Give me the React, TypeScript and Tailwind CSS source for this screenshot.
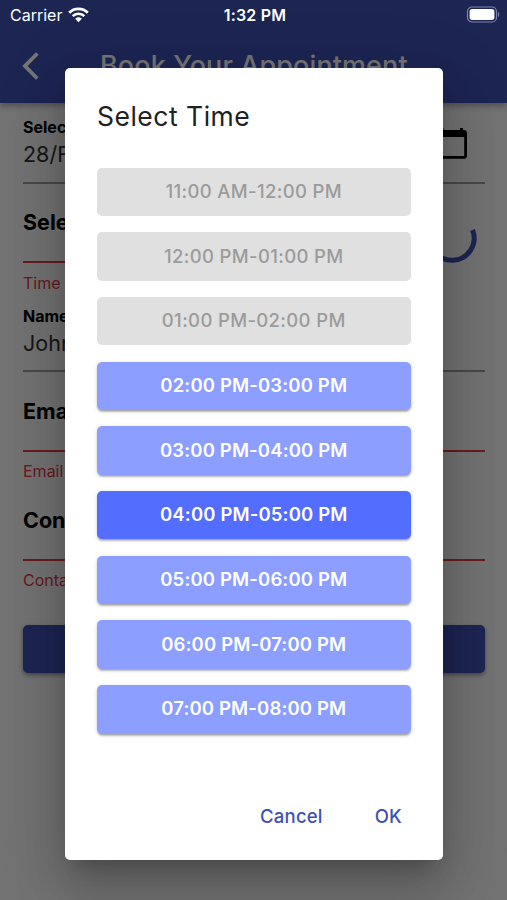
const slots = [
  { label: "11:00 AM-12:00 PM", state: "disabled" },
  { label: "12:00 PM-01:00 PM", state: "disabled" },
  { label: "01:00 PM-02:00 PM", state: "disabled" },
  { label: "02:00 PM-03:00 PM", state: "open" },
  { label: "03:00 PM-04:00 PM", state: "open" },
  { label: "04:00 PM-05:00 PM", state: "selected" },
  { label: "05:00 PM-06:00 PM", state: "open" },
  { label: "06:00 PM-07:00 PM", state: "open" },
  { label: "07:00 PM-08:00 PM", state: "open" },
];

const raised =
  "text-white font-[560] tracking-[0.15px] shadow-[0_3px_2px_-2px_rgba(0,0,0,0.2),0_2px_2px_0_rgba(0,0,0,0.16),0_1px_5px_0_rgba(0,0,0,0.12)]";
const slotStyles: Record<string, string> = {
  disabled: "bg-[#e0e0e0] text-[#9b9b9b] font-medium tracking-[0.35px]",
  open: "bg-[#8c9eff] " + raised,
  selected: "bg-[#536dfe] " + raised,
};

function StatusBar() {
  return (
    <div className="absolute inset-x-0 top-0 z-20 grid h-[30px] grid-cols-3 items-center pr-[7px] pl-[10px] text-[16px] leading-none text-white">
      <div className="flex items-center gap-[6px]">
        <span className="tracking-[0px]">Carrier</span>
        <svg width="21" height="16" viewBox="0 0 21 16" fill="none" stroke="white">
          <path d="M1.2 5.7C6.2.5 14.8.5 19.8 5.7" strokeWidth="2.7" />
          <path d="M4.7 9.2C7.8 6 13.2 6 16.3 9.2" strokeWidth="2.6" />
          <path d="M7.2 11.8C9 9.8 12 9.8 13.8 11.8L10.5 15.2Z" fill="white" stroke="none" />
        </svg>
      </div>
      <div className="text-center font-semibold tracking-[0.2px]">1:32 PM</div>
      <svg className="justify-self-end" width="34" height="18" viewBox="0 0 34 18">
        <rect x="1.5" y="1" width="29" height="15" rx="4.5" fill="none" stroke="#7f84a8" strokeWidth="1.2" />
        <rect x="3.6" y="3.1" width="24.8" height="10.8" rx="2.6" fill="white" />
        <path d="M32 6C33.6 6.5 33.6 10.5 32 11Z" fill="#7f84a8" />
      </svg>
    </div>
  );
}

function BookingPage() {
  return (
    <div className="flex h-full flex-col bg-[#fafafa]">
      <header className="z-0 flex h-[103px] shrink-0 items-start bg-[#3f51b5] pt-[50px] shadow-[0_3px_6px_rgba(0,0,0,0.3)]">
        <svg className="mt-[1px] ml-[22px]" width="18" height="30" viewBox="0 0 18 30" fill="none" stroke="white" strokeWidth="3.9">
          <path d="M15.3 2.5L3 15L15.3 27.5" />
        </svg>
        <h1 className="ml-[60px] text-[27px] leading-[32px] font-medium tracking-[0.1px] whitespace-nowrap text-white">
          Book Your Appointment
        </h1>
      </header>
      <main className="flex flex-col pt-[14px] pr-[22px] pl-[23px] text-[#333]">
        <section className="flex h-[67px] justify-between border-b-2 border-[#a0a0a0]">
          <div>
            <div className="h-[20px] text-[16px] leading-[20px] font-bold text-black">Select Date</div>
            <div className="mt-[4px] text-[21.5px] leading-[26px]">28/Feb/2021</div>
          </div>
          <svg className="mt-[11px] mr-[18px]" width="30" height="31" viewBox="0 0 30 31">
            <path d="M5 0V4M24.5 0V4" stroke="black" strokeWidth="2.8" />
            <rect x="1.4" y="3.4" width="27.2" height="26" rx="2" fill="none" stroke="black" strokeWidth="2.8" />
            <path d="M1 3H29V9H1Z" fill="black" />
          </svg>
        </section>
        <section className="flex h-[79px] items-end justify-between">
          <div className="flex h-full w-[390px] items-center border-b-2 border-[#e0403d] text-[21.5px] font-bold text-black">
            Select Time
          </div>
          <svg className="mr-[7px] h-[52px] w-[52px] shrink-0" viewBox="0 0 52 52" fill="none">
            <path d="M46.5 19A22 22 0 1 1 5 21" stroke="#3f51b5" strokeWidth="5" />
          </svg>
        </section>
        <p className="mt-[10px] h-[20px] text-[16px] leading-[20px] text-[#e53945]">Time is required</p>
        <section className="mt-[13px] h-[66px] border-b-2 border-[#a0a0a0]">
          <div className="text-[16px] leading-[20px] font-bold text-black">Name</div>
          <div className="mt-[4px] text-[21.5px] leading-[26px]">John Doe</div>
        </section>
        <section className="flex h-[80px] items-center border-b-2 border-[#e0403d] text-[21.5px] font-bold text-black">
          Email
        </section>
        <p className="mt-[9px] h-[20px] text-[16px] leading-[20px] text-[#e53945]">Email is required</p>
        <section className="flex h-[80px] items-center border-b-2 border-[#e0403d] text-[21.5px] font-bold text-black">
          Contact
        </section>
        <p className="mt-[9px] h-[20px] text-[16px] leading-[20px] text-[#e53945]">Contact is required</p>
        <div className="mt-[35px] h-[48px] rounded-[5px] bg-[#3f51b5] shadow-[0_2px_4px_rgba(0,0,0,0.4)]" />
      </main>
    </div>
  );
}

function TimeDialog() {
  return (
    <div className="absolute inset-0 z-10 bg-black/54 pt-[68px] pl-[65px]">
      <div className="flex h-[792px] w-[378px] flex-col rounded-[5px] bg-white px-[32px] pt-[32px] shadow-[0_15px_20px_-9px_rgba(0,0,0,0.2),0_32px_51px_4px_rgba(0,0,0,0.14),0_12px_62px_11px_rgba(0,0,0,0.12)]">
        <h2 className="text-[26.5px] leading-[32px] font-[430] tracking-[0.5px] text-[#212121]">Select Time</h2>
        <div className="mt-[35.5px] flex flex-col gap-[16.2px]">
          {slots.map((s) => (
            <button
              key={s.label}
              className={"h-[48.5px] w-[313.5px] shrink-0 rounded-[5px] text-[18.5px] " + slotStyles[s.state]}
            >
              {s.label}
            </button>
          ))}
        </div>
        <div className="mt-[70px] flex justify-end gap-[52px] pr-[9px] text-[18.5px] leading-[24px] font-medium tracking-[0.2px] text-[#3f51b5]">
          <button>Cancel</button>
          <button>OK</button>
        </div>
      </div>
    </div>
  );
}

export default function App() {
  return (
    <div className="relative h-[900px] w-[507px] overflow-hidden font-['Inter','Liberation_Sans',sans-serif]">
      <BookingPage />
      <TimeDialog />
      <StatusBar />
    </div>
  );
}
